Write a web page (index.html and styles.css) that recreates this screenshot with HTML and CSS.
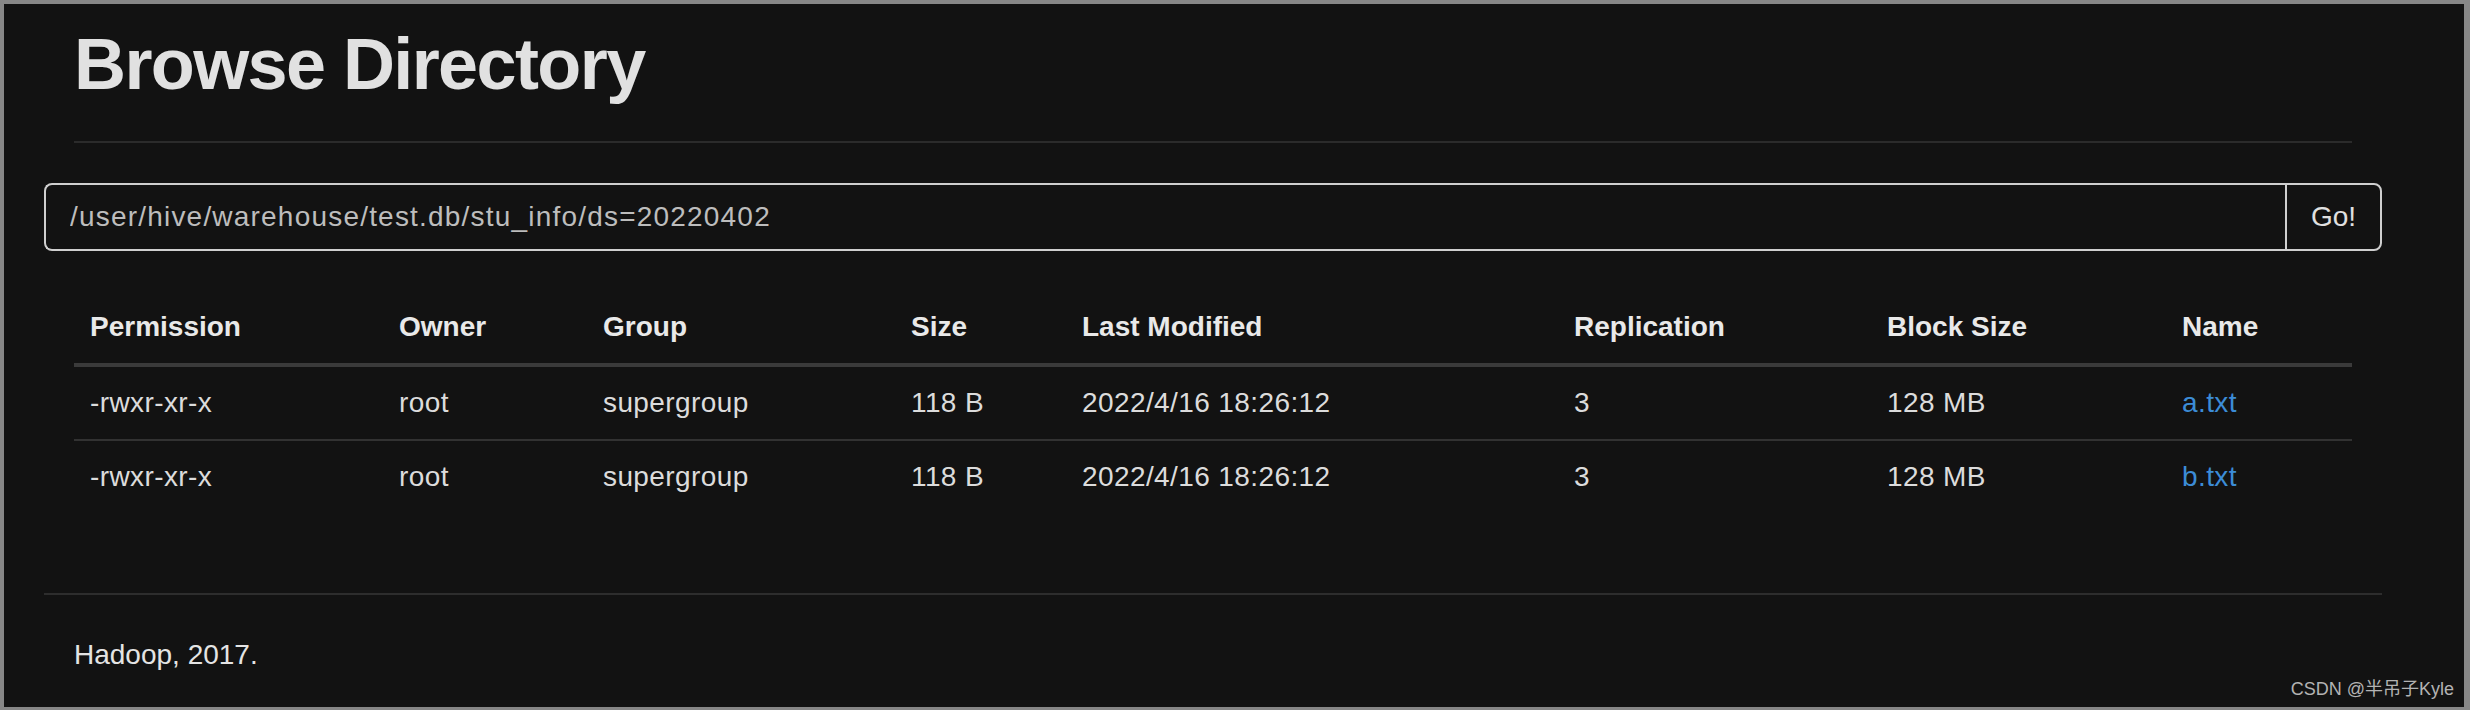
FILE: index.html
```html
<!DOCTYPE html>
<html lang="en">
<head>
<meta charset="utf-8">
<title>Browsing HDFS</title>
<link rel="stylesheet" href="styles.css">
</head>
<body>
<div class="frame">
  <div class="container">
    <div class="page-header"><h1>Browse Directory</h1></div>
    <div class="row">
      <form class="nav-form">
        <div class="input-group">
          <input type="text" class="form-control" value="/user/hive/warehouse/test.db/stu_info/ds=20220402">
          <button class="btn" type="button">Go!</button>
        </div>
      </form>
    </div>
    <div class="spacer"></div>
    <div class="panel">
      <table class="table">
        <colgroup>
          <col class="c1"><col class="c2"><col class="c3"><col class="c4">
          <col class="c5"><col class="c6"><col class="c7"><col class="c8">
        </colgroup>
        <thead>
          <tr>
            <th>Permission</th><th>Owner</th><th>Group</th><th>Size</th>
            <th>Last Modified</th><th>Replication</th><th>Block Size</th><th>Name</th>
          </tr>
        </thead>
        <tbody>
          <tr>
            <td>-rwxr-xr-x</td><td>root</td><td>supergroup</td><td>118 B</td>
            <td>2022/4/16 18:26:12</td><td>3</td><td>128 MB</td><td><a href="#">a.txt</a></td>
          </tr>
          <tr>
            <td>-rwxr-xr-x</td><td>root</td><td>supergroup</td><td>118 B</td>
            <td>2022/4/16 18:26:12</td><td>3</td><td>128 MB</td><td><a href="#">b.txt</a></td>
          </tr>
        </tbody>
      </table>
    </div>
    <div class="row">
      <hr class="foot-rule">
      <div class="col"><p>Hadoop, 2017.</p></div>
    </div>
  </div>
  <div class="watermark">CSDN @半吊子Kyle</div>
</div>
</body>
</html>
```

FILE: styles.css
```css
html, body {
  margin: 0;
  padding: 0;
  background: #878787;
}

.frame {
  position: relative;
  box-sizing: border-box;
  width: 2470px;
  height: 710px;
  border-style: solid;
  border-color: #878787;
  border-width: 4px 6px 3px 4px;
  background: #121212;
  overflow: hidden;
  font-family: "Liberation Sans", Arial, "Noto Sans CJK SC", sans-serif;
  font-size: 28px;
  line-height: 40px;
  color: #dedede;
}

.container {
  box-sizing: border-box;
  width: 2338px;
  margin-left: 40px;
  padding: 0 30px;
}

.page-header {
  margin: 0 0 40px;
  padding-bottom: 17px;
  border-bottom: 2px solid #2b2b2b;
}

.page-header h1 {
  margin: 21px 0 20px;
  font-size: 72px;
  line-height: 79px;
  font-weight: bold;
  letter-spacing: -1.6px;
  color: #e1e1e1;
}

.row {
  margin: 0 -30px;
}

.row::before,
.row::after {
  content: "";
  display: table;
}

.nav-form {
  margin: 0;
}

.input-group {
  display: flex;
  height: 68px;
}

.form-control {
  flex: 1;
  min-width: 0;
  box-sizing: border-box;
  height: 68px;
  margin: 0;
  padding: 0 24px;
  border: 2px solid #cfcfcf;
  border-right: none;
  border-radius: 8px 0 0 8px;
  background: #121212;
  color: #bdbdbd;
  font-family: "Liberation Sans", Arial, sans-serif;
  font-size: 28px;
  letter-spacing: 1.2px;
  outline: none;
}

.btn {
  box-sizing: border-box;
  width: 97px;
  height: 68px;
  margin: 0;
  padding: 0 24px;
  border: 2px solid #cfcfcf;
  border-radius: 0 8px 8px 0;
  background: #121212;
  color: #e0e0e0;
  font-family: "Liberation Sans", Arial, sans-serif;
  font-size: 28px;
  text-align: center;
}

.spacer {
  height: 40px;
}

.table {
  width: 2278px;
  table-layout: fixed;
  border-collapse: collapse;
  border-spacing: 0;
  margin-bottom: 40px;
}

.c1 { width: 309px; }
.c2 { width: 204px; }
.c3 { width: 308px; }
.c4 { width: 171px; }
.c5 { width: 492px; }
.c6 { width: 313px; }
.c7 { width: 295px; }
.c8 { width: 186px; }

.table th,
.table td {
  padding: 16px;
  line-height: 40px;
  text-align: left;
  vertical-align: top;
  white-space: nowrap;
}

.table th {
  font-weight: bold;
  color: #e9e9e9;
  border-bottom: 4px solid #3a3a3a;
}

.table td {
  color: #dcdcdc;
  letter-spacing: 0.4px;
}

.table tbody tr + tr td {
  border-top: 2px solid #323232;
}

.table a {
  color: #3c8cd6;
  text-decoration: none;
}

.foot-rule {
  margin: 40px 0;
  height: 0;
  border: 0;
  border-top: 2px solid #2d2d2d;
}

.col {
  padding: 0 30px;
}

.col p {
  margin: 0 0 20px;
  color: #e4e4e4;
}

.watermark {
  position: absolute;
  right: 10px;
  bottom: 8px;
  font-family: "Liberation Sans", Arial, "Noto Sans CJK SC", sans-serif;
  font-size: 18px;
  line-height: 20px;
  color: #b3b3b3;
}
```
